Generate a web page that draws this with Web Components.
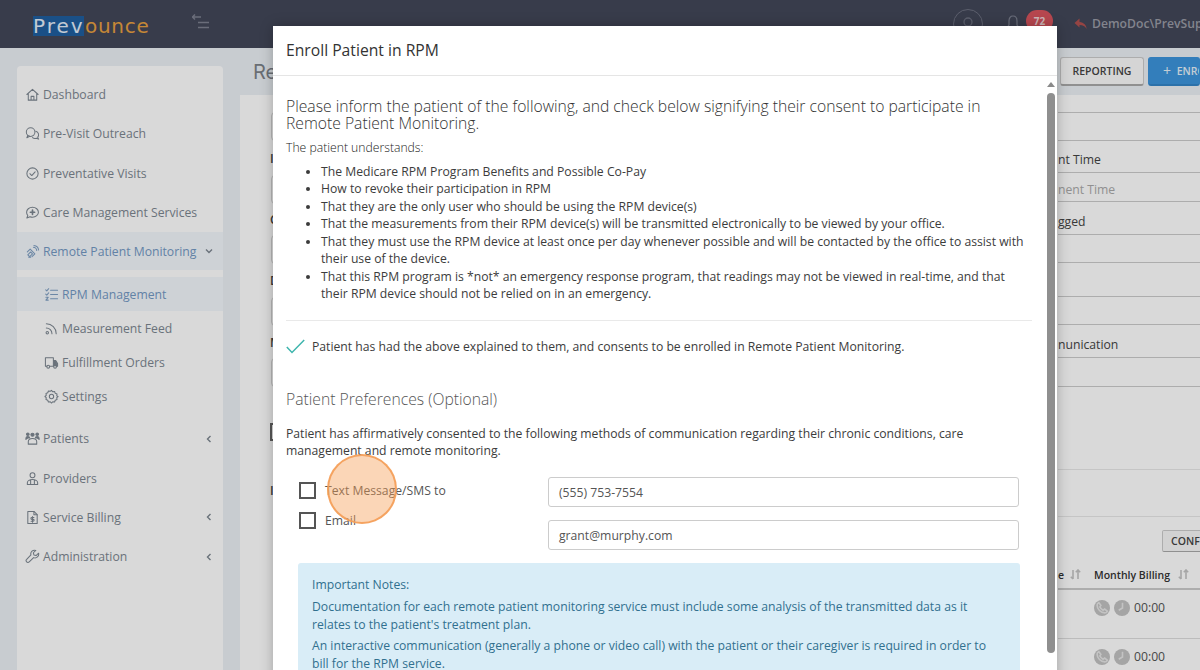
<!DOCTYPE html>
<html lang="en"><head><meta charset="utf-8"><title>Enroll Patient in RPM</title>
<style>
html,body{margin:0;height:100%;overflow:hidden}
body{font-family:"Open Sans","Noto Sans",sans-serif;background:#ecf0f5}
</style></head>
<body>
<app-shell></app-shell>
<script>
const I={
dash:'<path d="M2 8 8 2.5 14 8M3.500 7v7h9V7M6.500 14v-4h3v4"/>',
chat:'<circle cx="6" cy="6.500" r="4.600"/><path d="M3 10 2 12.500 5 11"/><path d="M11.500 5.500a4 4 0 0 1 2 6.500l1 2-2.500-1a4 4 0 0 1-4-.7"/>',
check:'<circle cx="8" cy="8" r="6"/><path d="M5.200 8.200 7.200 10.200 10.800 6.200"/>',
care:'<path d="M8 2.500c3.600 0 6.300 2.300 6.300 5.200S11.600 13 8 13c-1 0-1.900-.2-2.700-.5L2 13.800l1-2.600C2.200 10.300 1.700 9 1.700 7.700 1.700 4.800 4.400 2.500 8 2.500Z"/><path d="M8 5.500v4.400M5.800 7.700h4.400" stroke-width="1.800"/>',
rpm:'<path d="M3 11.500 6 8.500l2 2-3 3Z"/><path d="M2.500 8.500 5.500 5.500l5 5-3 3M6 14h-2"/><path d="M9 3.500a3.500 3.500 0 0 1 3.500 3.500M9.500 1.500a5.500 5.500 0 0 1 5 5"/>',
list:'<path d="M7 3.500h7.500M7 8h7.500M7 12.500h7.500"/><path d="M1.800 3 3 4.200 5 1.800M1.800 7.500 3 8.700 5 6.300M2 11h2.500L2 14h2.500"/>',
rss:'<circle cx="3.500" cy="12.500" r="1.300"/><path d="M2.500 7.500a6 6 0 0 1 6 6M2.500 3a10.500 10.500 0 0 1 10.500 10.500"/>',
truck:'<path d="M3 12H1.500V3h8.500v9H6M10 6h2.500l2 3v3h-1"/><circle cx="4.500" cy="12.500" r="1.500"/><circle cx="11.800" cy="12.500" r="1.500"/><path d="M10.500 7h2l1.300 2v2.500h-3.300Z" fill="currentColor"/>',
gear:'<circle cx="8" cy="8" r="2.300"/><path d="M8 1.500 9.300 3l2-.3.7 1.900 1.900.7-.3 2L15 8l-1.400 1.300.3 2-1.900.7-.7 1.900-2-.3L8 15l-1.300-1.400-2 .3-.7-1.900-1.900-.7.3-2L1 8l1.400-1.300-.3-2 1.900-.7.7-1.900 2 .3Z"/>',
pats:'<circle cx="8" cy="4" r="1.700" fill="currentColor"/><circle cx="3" cy="3.500" r="1.400" fill="currentColor"/><circle cx="13" cy="3.500" r="1.400" fill="currentColor"/><path d="M1 9V7.500C1 6.500 2 6 3 6s2 .5 2 1.500M15 9V7.500C15 6.500 14 6 13 6s-2 .5-2 1.500" fill="currentColor"/><path d="M3.500 14v-2.500C3.500 9.500 5.500 8 8 8s4.500 1.500 4.500 3.500V14Z"/>',
prov:'<circle cx="8" cy="4.500" r="2.600"/><path d="M2.500 14.500v-2c0-2 2.500-3.500 5.500-3.500s5.500 1.500 5.500 3.500v2ZM6 9.500v5M10 9.500v5"/>',
bill:'<path d="M3 1.500h6.500L13 5v9.500H3Z"/><path d="M9.500 1.500V5H13M9.500 8H7.300a1 1 0 0 0 0 2h1.400a1 1 0 0 1 0 2H6.500M8 7v6"/>',
wrench:'<path d="M14.500 4.500 11.800 7 9.500 6.300 8.900 4 11.500 1.500A4 4 0 0 0 6.300 6.300L1.800 11a1.900 1.900 0 0 0 2.700 2.800L9.200 9.200A4 4 0 0 0 14.500 4.500Z"/>'
};
const svg=(k,s=15,sw=1.1)=>`<svg width="${s}" height="${s}" viewBox="0 0 16 16" fill="none" stroke="currentColor" stroke-width="${sw}" stroke-linecap="round" stroke-linejoin="round">${I[k]}</svg>`;
const sort='<svg width="11" height="11" viewBox="0 0 11 11" fill="none" stroke="#c4c4c4" stroke-width="1.600"><path d="M3 1v9M.8 7.800 3 10M8 10V1M5.800 3.200 8 1l2.200 2.200"/></svg>';
const phone='<svg width="13" height="13" viewBox="0 0 12 12" fill="none" stroke="#e6e6e6" stroke-width="1.500"><path d="M2.500 1.500 4.500 4 3.500 5.500c.7 1.300 1.700 2.300 3 3L8 7.500l2.500 2c-.5 1-1.500 1.500-2.500 1.500C4.500 11 1 7.500 1 4c0-1 .5-2 1.500-2.500Z"/></svg>';
const clock='<svg width="13" height="13" viewBox="0 0 12 12" fill="none" stroke="#e6e6e6" stroke-width="1.500"><path d="M6 1.500V6.500L2.500 8.500"/></svg>';

class Base extends HTMLElement{
  render(css,html){this.attachShadow({mode:'open'}).innerHTML=`<style>${css}</style>${html}`}
}
class AppTopbar extends Base{connectedCallback(){this.render(`
:host{display:flex;align-items:center;height:48px;background:#424759;flex:none;color:#a4a7b1;overflow:hidden;white-space:nowrap}
.logo{margin-left:33px;font:400 20px/20px "DejaVu Sans",sans-serif;display:flex;width:116px;margin-top:3px}
.logo b{font-weight:400;background:#1f5f9f;color:#e4eef9;height:20px;letter-spacing:2px;width:51px;flex:none}
.logo i{font-style:normal;color:#e8a040;letter-spacing:.7px;margin-left:1px}
.tog{margin-left:43px;width:18px;height:16px;color:#7d8190;margin-top:-4px}
.sp{flex:1}
.ring{width:28px;height:28px;border:1px solid #6d7080;border-radius:50%;display:flex;align-items:center;justify-content:center;color:#6d7080}
.bell{margin-left:23px;color:#7d8190;display:flex;margin-top:-2px}
.badge{margin-left:6px;background:#d8545d;color:#f1d6d8;border-radius:12px;font:700 10px/20px "Open Sans",sans-serif;height:22px;display:flex;align-items:center;width:27px;justify-content:center;margin-top:-6px}
.rep{margin-left:21px;color:#b0504f;display:flex}
.name{margin-left:4px;font:600 12.200px/18px "Open Sans",sans-serif;color:#9a9ca6;width:108px}
`,`<div class="logo"><b>Prev</b><i>ounce</i></div>
<svg class="tog" viewBox="0 0 18 16" fill="none" stroke="currentColor" stroke-width="1.500"><path d="M0 3h9M3 .5 .5 3 3 5.500M6 8.500h11M6 13.500h11"/></svg>
<span class="sp"></span>
<span class="ring"><svg width="16" height="16" viewBox="0 0 16 16" fill="none" stroke="currentColor" stroke-width="1.300"><circle cx="8" cy="6" r="4"/><path d="M4 14c1-3 7-3 8 0"/></svg></span>
<span class="bell"><svg width="14" height="18" viewBox="0 0 14 18" fill="none" stroke="currentColor" stroke-width="1.200"><path d="M7 2C4.500 2 3 4 3 7v4l-1.500 2h11L11 11V7c0-3-1.500-5-4-5Z"/></svg></span>
<span class="badge">72</span>
<span class="rep"><svg width="14" height="12" viewBox="0 0 14 12" fill="currentColor"><path d="M5.500.5 .5 5l5 4.500V7c3.500 0 5.500 1 7 4 0-4-2.500-6.500-7-7Z"/></svg></span>
<span class="name">DemoDoc\\PrevSup</span>`)}}
class NavItem extends Base{connectedCallback(){
 const sub=this.hasAttribute('sub'),a=this.hasAttribute('active'),ch=this.getAttribute('chev');
 const chev=ch?`<svg class="ch" width="8" height="8" viewBox="0 0 8 8" fill="none" stroke="currentColor" stroke-width="1.400"><path d="${ch==='down'?'M1 2.500 4 5.500 7 2.500':'M5.500 1 2.500 4 5.500 7'}"/></svg>`:'';
 this.render(`
:host{display:flex;align-items:center;height:${sub?34:39.3}px;box-sizing:border-box;padding-left:${sub?27:8}px;font-size:12.200px;color:${a?'#7499c4':'#7d8791'};white-space:nowrap;${a?'background:#f2f7fc;':''}}
.ic{width:15px;height:15px;display:flex;margin-right:3px;color:${a?'#7f9fc2':'#7d8791'}}
.t{flex:1}
.ch{margin-right:10px;color:#7d8791}
`,`<span class="ic">${svg(this.getAttribute('icon'))}</span><span class="t"><slot></slot></span>${chev}`)}}
class SideNav extends Base{connectedCallback(){this.render(`
:host{display:flex;flex-direction:column;width:206px;margin-left:17px;background:#fff;border-radius:4px 4px 0 0;padding-top:9px;flex:none;box-sizing:border-box}
.subs{margin-top:7px;margin-bottom:6px;display:flex;flex-direction:column}
`,`<nav-item icon="dash">Dashboard</nav-item>
<nav-item icon="chat">Pre-Visit Outreach</nav-item>
<nav-item icon="check">Preventative Visits</nav-item>
<nav-item icon="care">Care Management Services</nav-item>
<nav-item icon="rpm" active chev="down" style="height:38px">Remote Patient Monitoring</nav-item>
<div class="subs">
<nav-item sub active icon="list">RPM Management</nav-item>
<nav-item sub icon="rss">Measurement Feed</nav-item>
<nav-item sub icon="truck">Fulfillment Orders</nav-item>
<nav-item sub icon="gear">Settings</nav-item>
</div>
<nav-item icon="pats" chev="left">Patients</nav-item>
<nav-item icon="prov">Providers</nav-item>
<nav-item icon="bill" chev="left">Service Billing</nav-item>
<nav-item icon="wrench" chev="left">Administration</nav-item>`);
}}
class BgContent extends Base{connectedCallback(){
 const rows=[['',29],['nt Time',32],['nent Time',29,1],['gged',33],['',28],['',34],['',28],['nunication',33],['',29]];
 const billRow=`<div class="td"><span class="dot">${phone}</span><span class="dot">${clock}</span><span class="tm">00:00</span></div>`;
 this.render(`
:host{display:flex;flex-direction:column;flex:1;min-width:0;margin-left:17px;overflow:hidden;color:#444}
.top{height:47px;display:flex;align-items:center;justify-content:flex-end;gap:4px;flex:none;margin-top:9px;margin-bottom:-9px}
h1{margin:0 auto 0 13px;font:400 20px/28px Inter,sans-serif;color:#7c8289;padding-bottom:18px}
.btn{height:29px;box-sizing:border-box;border:1px solid #ccc;border-bottom:2px solid #aaa;background:#fbfbfb;border-radius:3px;font:600 10.500px/26px "Open Sans",sans-serif;color:#444;width:84px;text-align:center;white-space:nowrap;margin-top:-18px}
.blue{background:#3d95dc;color:#e6f1fa;border-color:#3d95dc;border-bottom-color:#3385c8;width:52px;text-align:left;padding-left:14px;overflow:hidden}
.blue b{font-weight:400;font-size:14px;margin-right:3px;vertical-align:-1px}
.card{flex:1;background:#fff;display:grid;grid-template-columns:818px 1fr}
.left{padding:17px 0 0 31px;display:flex;flex-direction:column;align-items:flex-start}
.inp{height:29px;border:1px solid #d5d5d5;border-radius:4px;width:200px;box-sizing:border-box;flex:none}
.lb{font-size:12.200px;font-weight:600;display:flex;align-items:center;flex:none;margin-left:-1px}
.cb{width:18px;height:18px;box-sizing:border-box;border:2px solid #666;margin:36px 0 0 -1px;flex:none}
.right{padding-top:17px;font-size:12.200px;display:flex;flex-direction:column}
.r{box-sizing:border-box;border-bottom:1px solid #ccc;display:flex;align-items:center;flex:none;padding-top:6px}
.r:first-child{border-top:1px solid #ccc}
.dim{color:#aaa;padding-top:5px}
.pad{height:83px;border-bottom:1px solid #e8e8e8;flex:none;box-sizing:border-box}
.cf{height:47px;display:flex;align-items:center;flex:none;padding-left:104px}
.cf span{border:1px solid #ccc;border-bottom-color:#aaa;background:#f7f7f7;font:600 10.500px/20px "Open Sans",sans-serif;padding:0 8px;color:#444;border-radius:2px;white-space:nowrap}
.th{height:26px;box-sizing:border-box;border-bottom:2px solid #ccc;display:flex;align-items:center;font:600 10.500px/16px "Open Sans",sans-serif;white-space:nowrap;flex:none;color:#333;padding-bottom:3px}
.td{height:49px;border-bottom:1px solid #ddd;display:flex;align-items:center;padding-left:36px;gap:4px;flex:none;font-size:12.200px;color:#555;padding-bottom:13px;box-sizing:border-box}
.dot{width:16px;height:16px;border-radius:50%;background:#c2c2c2;display:flex;align-items:center;justify-content:center}
`,`<div class="top"><h1>Re</h1><span class="btn">REPORTING</span><span class="btn blue"><b>+</b> ENRO</span></div>
<div class="card"><div class="left">
<span class="inp"></span><span class="lb" style="height:34px">I</span><span class="inp"></span><span class="lb" style="height:31px">C</span><span class="inp"></span><span class="lb" style="height:33px">D</span><span class="inp"></span><span class="lb" style="height:32px">M</span><span class="inp"></span>
<span class="cb"></span><span class="lb" style="height:14px;margin-top:42px">I</span>
</div><div class="right">
${rows.map(r=>`<div class="r ${r[2]?'dim':''}" style="height:${r[1]}px">${r[0]}</div>`).join('')}
<div class="pad"></div><div class="pad" style="height:47px"></div>
<div class="cf"><span>CONFI</span></div>
<div class="th"><span style="width:12px">e</span>${sort}<span style="margin-left:13px">Monthly Billing</span><span style="margin-left:8px;display:flex">${sort}</span></div>
${billRow}${billRow}
</div></div>`)}}
class CheckBox extends Base{connectedCallback(){this.render(`
:host{display:flex;align-items:center;font-size:12.200px;color:#555;height:17px;gap:9px;white-space:nowrap}
.b{width:13px;height:13px;border:2px solid #555;flex:none}
`,`<span class="b"></span><slot></slot>`)}}
class RpmModal extends Base{connectedCallback(){this.render(`
:host{position:absolute;left:273px;top:26px;width:784px;height:700px;background:#fff;display:flex;flex-direction:column;color:#3c3c3c;font-size:12.200px;line-height:17.500px;box-shadow:0 0 12px rgba(0,0,0,.25)}
header{height:49px;flex:none;border-bottom:1px solid #e5e5e5;padding-left:13px;display:flex;align-items:center;font-size:15.700px;color:#333}
.wrap{flex:1;position:relative;min-height:0;display:flex}
.body{flex:1;padding:21.600px 15px 0 13px;min-width:0}
h2{font-size:15.700px;font-weight:300;line-height:17.500px;margin:0;color:#333}
.und{font-weight:300;margin:6.400px 0 0;color:#222;line-height:17px}
ul{margin:7px 0 0;padding:0 0 0 35px}
hr{border:0;border-top:1px solid #e9e9e9;margin:17px 0 0}
.cons{display:flex;align-items:center;height:17px;margin-top:17px;gap:7px}
.pref{margin-top:35px;color:#555;line-height:18px}
.p{margin:16.600px 0 0}
.grid{display:grid;grid-template-columns:249px 471px;margin:17.400px 0 0 13px}
.chk{display:flex;flex-direction:column;gap:13.500px;padding-top:5px}
.ins{display:flex;flex-direction:column;gap:13px}
.in{height:30px;box-sizing:border-box;border:1px solid #ccc;border-radius:3px;padding:0 10px;line-height:29px;color:#555}
.al{margin:13px 0 0 12px;width:722px;box-sizing:border-box;background:#d9edf7;color:#31708f;padding:13px 20px 13px 14px;border-radius:3px}
.al p{margin:0 0 4px}
.sb{width:8px;flex:none;margin-right:2px;position:relative}
.th{position:absolute;top:17px;left:0;right:0;height:560px;background:#8f8f8f;border-radius:4px}
.up{position:absolute;top:6px;left:0;width:0;height:0;border:4px solid transparent;border-top:0;border-bottom:5px solid #8a8a8a}
.tap{position:absolute;left:54px;top:378px;width:66px;height:66px;border:2px solid rgba(244,157,86,.9);background:rgba(246,158,84,.42);border-radius:50%;pointer-events:none}
`,`<header>Enroll Patient in RPM</header>
<div class="wrap"><div class="body">
<h2>Please inform the patient of the following, and check below signifying their consent to participate in Remote Patient Monitoring.</h2>
<p class="und">The patient understands:</p>
<ul>
<li>The Medicare RPM Program Benefits and Possible Co-Pay</li>
<li>How to revoke their participation in RPM</li>
<li>That they are the only user who should be using the RPM device(s)</li>
<li>That the measurements from their RPM device(s) will be transmitted electronically to be viewed by your office.</li>
<li>That they must use the RPM device at least once per day whenever possible and will be contacted by the office to assist with their use of the device.</li>
<li>That this RPM program is *not* an emergency response program, that readings may not be viewed in real-time, and that their RPM device should not be relied on in an emergency.</li>
</ul>
<hr>
<div class="cons"><svg width="19" height="15" viewBox="0 0 19 15" fill="none" stroke="#3eb5ad" stroke-width="1.500"><path d="M.8 8 6 13.500 18.200 1"/></svg><span>Patient has had the above explained to them, and consents to be enrolled in Remote Patient Monitoring.</span></div>
<h2 class="pref">Patient Preferences (Optional)</h2>
<p class="p">Patient has affirmatively consented to the following methods of communication regarding their chronic conditions, care management and remote monitoring.</p>
<div class="grid"><div class="chk"><check-box>Text Message/SMS to</check-box><check-box>Email</check-box></div>
<div class="ins"><div class="in">(555) 753-7554</div><div class="in">grant@murphy.com</div></div></div>
<div class="al"><p style="margin-bottom:5px">Important Notes:</p>
<p>Documentation for each remote patient monitoring service must include some analysis of the transmitted data as it relates to the patient's treatment plan.</p>
<p>An interactive communication (generally a phone or video call) with the patient or their caregiver is required in order to bill for the RPM service.</p></div>
</div>
<div class="sb"><span class="up"></span><span class="th"></span></div>
<span class="tap"></span>
</div>`)}}
class AppShell extends Base{connectedCallback(){this.render(`
:host{display:flex;flex-direction:column;height:670px;overflow:hidden;position:relative;background:#ecf0f5;font-family:"Open Sans","Noto Sans",sans-serif}
.main{flex:1;display:flex;min-height:0;padding-top:18px;box-sizing:border-box}
.scrim{position:absolute;inset:0;background:rgba(0,0,0,.15)}
`,`<app-topbar></app-topbar><div class="main"><side-nav></side-nav><bg-content style="margin-top:-18px"></bg-content></div><div class="scrim"></div><rpm-modal></rpm-modal>`)}}
for(const[n,c]of Object.entries({'nav-item':NavItem,'app-topbar':AppTopbar,'side-nav':SideNav,'bg-content':BgContent,'check-box':CheckBox,'rpm-modal':RpmModal,'app-shell':AppShell}))customElements.define(n,c);
</script>
</body></html>
